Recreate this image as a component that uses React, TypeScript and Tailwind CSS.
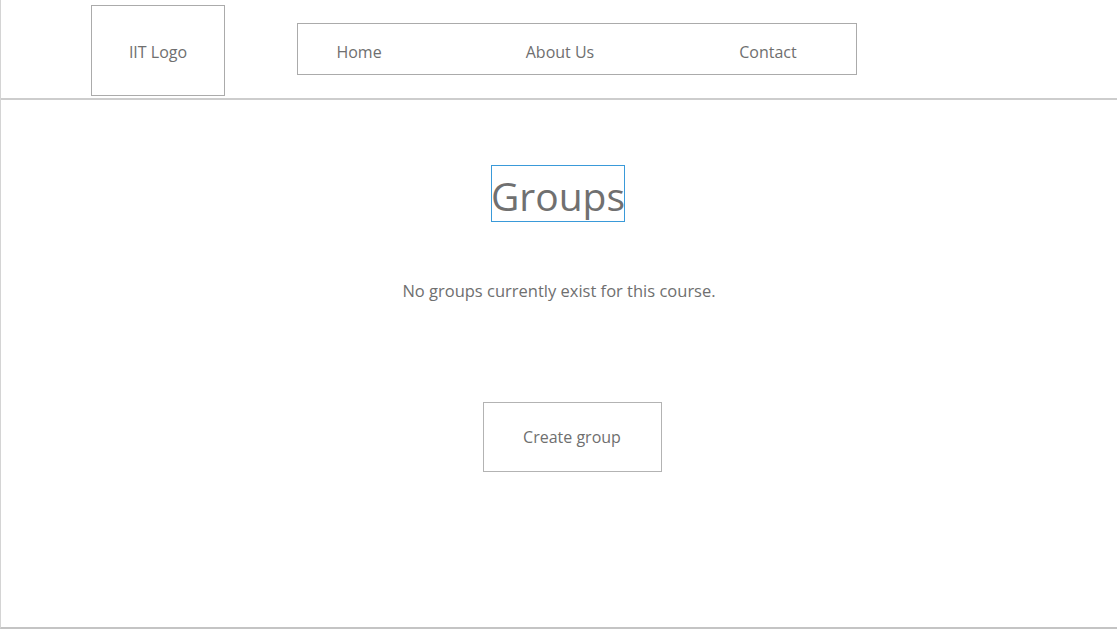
const font = { fontFamily: '"Open Sans", "Noto Sans", Arial, sans-serif' };

const navItems = [
  { label: "Home", cell: "w-[122px]" },
  { label: "About Us", cell: "w-[280px]" },
  { label: "Contact", cell: "w-[136px]" },
];

export default function App() {
  return (
    <div
      className="flex h-[629px] w-[1117px] flex-col overflow-hidden border-b-2 border-l border-b-[#c4c4c4] border-l-[#d4d4d4] bg-white text-[#6f6f6f]"
      style={font}
    >
      <header className="flex h-[100px] shrink-0 items-start border-b-2 border-[#cdcdcd] pl-[90px]">
        <div className="mt-[5px] flex h-[91px] w-[134px] items-center justify-center border border-[#ababab] pt-[2px] text-[16px]">
          IIT Logo
        </div>
        <nav className="ml-[72px] mt-[23px] flex h-[52px] w-[560px] items-center border border-[#ababab] pt-[6px] text-[16px]">
          {navItems.map((item) => (
            <span key={item.label} className={`${item.cell} text-center`}>
              {item.label}
            </span>
          ))}
        </nav>
      </header>

      <main className="flex flex-1 flex-col items-center">
        <div className="mt-[65px] flex w-full justify-center pr-[2px]">
          <h1 className="flex h-[57px] w-[134px] items-center justify-center border border-[#3a9ad9] pt-[3px] text-[39px] leading-none text-[#707070]">
            Groups
          </h1>
        </div>
        <p className="mt-[57px] text-[16.5px]">No groups currently exist for this course.</p>
        <div className="mt-[98px] flex w-full justify-center pl-[26px]">
          <button className="flex h-[70px] w-[179px] items-center justify-center border border-[#b3b3b3] text-[16px] text-[#6f6f6f]">
            Create group
          </button>
        </div>
      </main>
    </div>
  );
}
